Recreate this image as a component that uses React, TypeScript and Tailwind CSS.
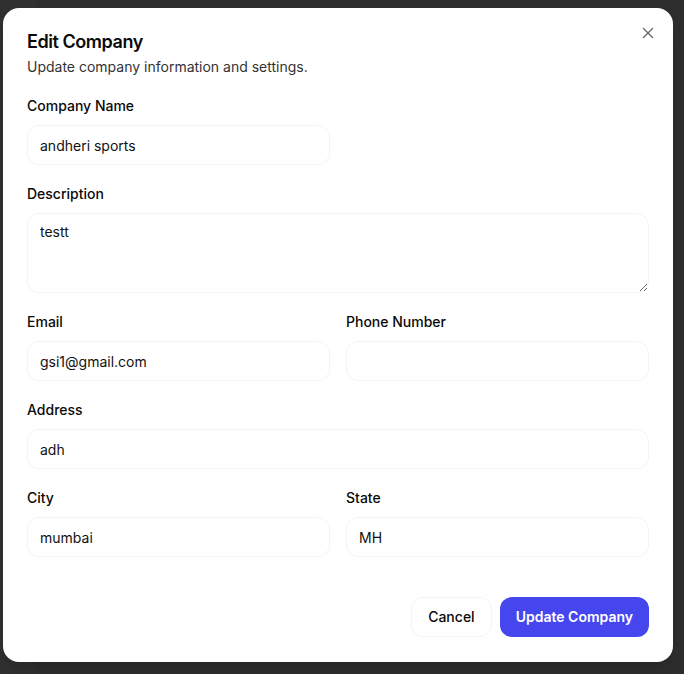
import React from "react";
import { X } from "lucide-react";

const font = { fontFamily: "Inter, 'Noto Sans', sans-serif" };

function Field({ label, value, className = "" }: { label: string; value: string; className?: string }) {
  return (
    <div className={"flex flex-col gap-[9px] " + className}>
      <label className="text-sm leading-5 font-medium text-[#0a0a0a]">{label}</label>
      <input
        defaultValue={value}
        className="h-10 w-full rounded-xl border border-[#f3f4f6] bg-white px-3 text-sm text-[#111] outline-none"
      />
    </div>
  );
}

export default function App() {
  return (
    <div className="relative h-[674px] w-[684px] overflow-hidden bg-[#2d2d2d]" style={font}>
      <div className="flex h-full">
        <div className="w-[36px] bg-[#303030]" />
        <div className="flex-1" />
      </div>
      <div className="absolute left-[3px] top-[8px] w-[670px] rounded-2xl bg-white px-6 pt-6 pb-[25px] shadow-lg">
        <button className="absolute right-4 top-4 text-[#444] opacity-80">
          <X size={18} strokeWidth={1.8} />
        </button>
        <div className="flex flex-col gap-1.5">
          <h2 className="mt-px text-lg leading-none font-semibold tracking-tight text-[#0a0a0a]">Edit Company</h2>
          <p className="text-sm leading-5 text-[#333]">Update company information and settings.</p>
        </div>
        <div className="mt-[19px] flex flex-col gap-[19px]">
          <div className="grid grid-cols-2 gap-4">
            <Field label="Company Name" value="andheri sports" />
          </div>
          <div className="flex flex-col gap-[9px]">
            <label className="text-sm leading-5 font-medium text-[#0a0a0a]">Description</label>
            <textarea
              defaultValue="testt"
              className="h-20 min-h-[80px] w-full rounded-xl border border-[#f3f4f6] bg-white px-3 py-2 text-sm leading-5 text-[#111] outline-none"
            />
          </div>
          <div className="grid grid-cols-2 gap-4">
            <Field label="Email" value="gsi1@gmail.com" />
            <Field label="Phone Number" value="" />
          </div>
          <Field label="Address" value="adh" />
          <div className="grid grid-cols-2 gap-4">
            <Field label="City" value="mumbai" />
            <Field label="State" value="MH" />
          </div>
        </div>
        <div className="mt-10 flex justify-end gap-2">
          <button className="h-10 rounded-xl border border-[#f3f4f6] bg-white px-4 text-sm font-medium text-[#0a0a0a]">
            Cancel
          </button>
          <button className="h-10 rounded-xl bg-[#4646ef] px-4 text-sm font-semibold text-white">
            Update Company
          </button>
        </div>
      </div>
    </div>
  );
}
